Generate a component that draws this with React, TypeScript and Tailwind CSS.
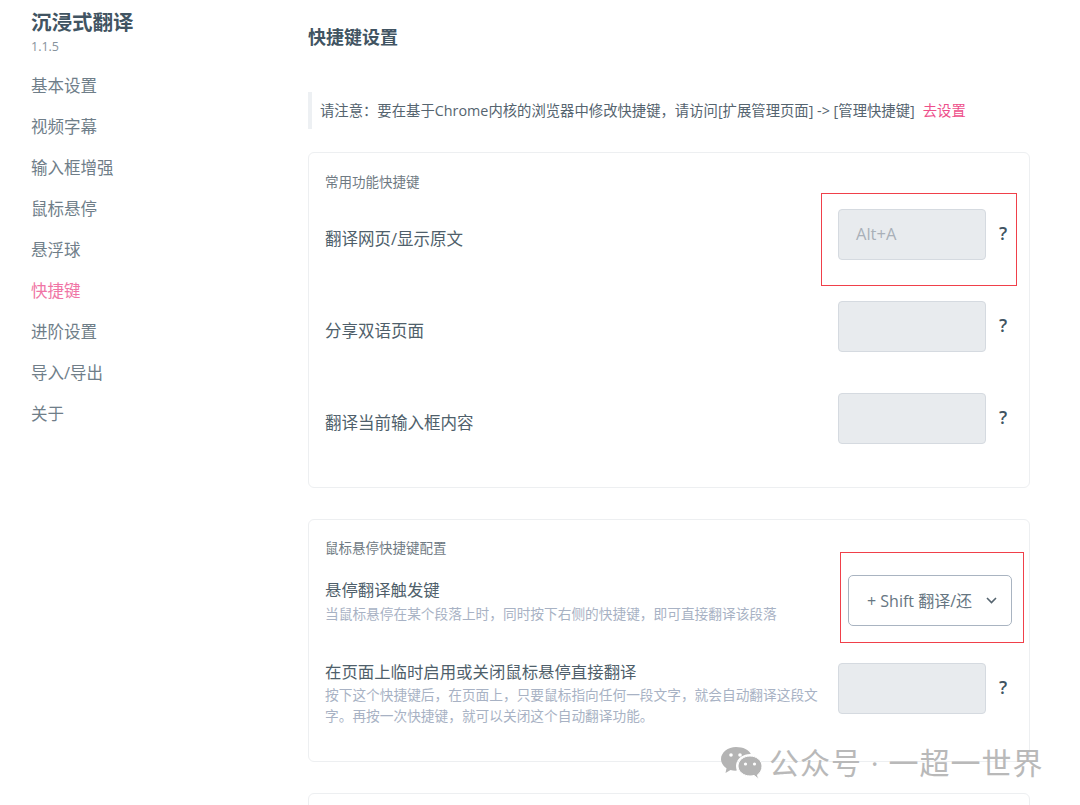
import React from "react";

const NAV_ITEMS = ["基本设置", "视频字幕", "输入框增强", "鼠标悬停", "悬浮球", "快捷键", "进阶设置", "导入/导出", "关于"];

// 全角标点
const NOTICE = "请注意\uFF1A要在基于Chrome内核的浏览器中修改快捷键\uFF0C请访问[扩展管理页面] -> [管理快捷键]";
const HOVER_DESC = "当鼠标悬停在某个段落上时\uFF0C同时按下右侧的快捷键\uFF0C即可直接翻译该段落";
const TOGGLE_DESC =
  "按下这个快捷键后\uFF0C在页面上\uFF0C只要鼠标指向任何一段文字\uFF0C就会自动翻译这段文字\u3002再按一次快捷键\uFF0C就可以关闭这个自动翻译功能\u3002";

function KeyInput({ value }: { value?: string }) {
  return (
    <div className="flex items-center gap-[13px]">
      <div className="flex h-[51px] w-[148px] items-center rounded-[4px] border border-[#d5dae0] bg-[#e8ebee] pl-[17px] text-[16.5px] text-[#a9b0b8]">
        {value}
      </div>
      <span className="w-[10px] pb-[2px] text-[18px] font-semibold text-[#415462]">?</span>
    </div>
  );
}

function ShortcutRow({ label, value, className }: { label: string; value?: string; className: string }) {
  return (
    <div className={`flex items-start justify-between ${className}`}>
      <span className="pt-[18px] text-[16.5px] leading-[24px] text-[#4f5f6b]">{label}</span>
      <KeyInput value={value} />
    </div>
  );
}

export default function App() {
  return (
    <div
      className="relative flex h-[805px] w-[1080px] overflow-hidden bg-white"
      style={{ fontFamily: '"Open Sans", "Noto Sans CJK SC", sans-serif' }}
    >
      <aside className="w-[308px] shrink-0 pl-[31px] pt-[8px]">
        <h1 className="text-[20.5px] font-bold leading-[28px] text-[#415462]">沉浸式翻译</h1>
        <p className="mt-[2px] text-[12.5px] leading-[18px] text-[#86929c]">1.1.5</p>
        <nav className="mt-[9px] flex flex-col">
          {NAV_ITEMS.map((item) => (
            <span
              key={item}
              className={`h-[41px] text-[16.5px] leading-[41px] ${item === "快捷键" ? "text-[#f075a5]" : "text-[#6f7e89]"}`}
            >
              {item}
            </span>
          ))}
        </nav>
      </aside>

      <main className="w-[722px] shrink-0 pt-[24px]">
        <h2 className="text-[18px] font-bold leading-[27px] text-[#415462]">快捷键设置</h2>

        <div className="mt-[41px] flex h-[37px] items-center border-l-[4px] border-[#edf0f3] pl-[8px] text-[14.35px] text-[#55646f]">
          {NOTICE}
          <span className="ml-[8px] text-[#ee4f8b]">去设置</span>
        </div>

        <section className="mt-[23px] h-[336px] rounded-[6px] border border-[#edeff1] px-[16px] pt-[19px] pr-[20px]">
          <h3 className="text-[13.5px] leading-[20px] text-[#6f7a83]">常用功能快捷键</h3>
          <ShortcutRow label="翻译网页/显示原文" value="Alt+A" className="mt-[17px]" />
          <ShortcutRow label="分享双语页面" className="mt-[41px]" />
          <ShortcutRow label="翻译当前输入框内容" className="mt-[41px]" />
        </section>

        <section className="mt-[31px] h-[243px] rounded-[6px] border border-[#edeff1] px-[16px] pt-[18px] pr-[20px]">
          <h3 className="text-[13.5px] leading-[20px] text-[#6f7a83]">鼠标悬停快捷键配置</h3>

          <div className="mt-[17px] flex items-start justify-between">
            <div className="pt-[3px]">
              <p className="text-[16.4px] leading-[24px] text-[#4f5f6b]">悬停翻译触发键</p>
              <p className="mt-[1px] text-[13.7px] leading-[21px] text-[#a8b2c4]">{HOVER_DESC}</p>
            </div>
            <div className="-mr-[3px] flex h-[51px] w-[164px] items-center rounded-[5px] border border-[#a9b4c1] pl-[18px] pr-[13px]">
              <span className="w-[105px] overflow-hidden whitespace-nowrap text-[16px] text-[#667682]">+ Shift 翻译/还原</span>
              <svg className="ml-auto" width="13" height="9" viewBox="0 0 13 9" fill="none" stroke="#55646f" strokeWidth="1.6">
                <path d="M2 2l4.500 4.500L11 2" />
              </svg>
            </div>
          </div>

          <div className="mt-[34px] flex items-start justify-between">
            <div className="w-[498px]">
              <p className="text-[16.4px] leading-[24px] text-[#4f5f6b]">在页面上临时启用或关闭鼠标悬停直接翻译</p>
              <p className="text-[13.7px] leading-[21px] text-[#a8b2c4]">{TOGGLE_DESC}</p>
            </div>
            <div className="pt-[3px]">
              <KeyInput />
            </div>
          </div>
        </section>

        <section className="mt-[31px] h-[60px] rounded-[6px] border border-[#edeff1]" />
      </main>

      {/* annotations on the screenshot */}
      <div className="absolute left-[821px] top-[193px] h-[93px] w-[196px] border border-[#f0404a]" />
      <div className="absolute left-[840px] top-[552px] h-[91px] w-[184px] border border-[#f0404a]" />

      {/* watermark */}
      <div className="absolute left-[721px] top-[745px] flex items-center gap-[7px]">
        <svg width="41" height="35" viewBox="0 0 41 35" fill="#b4b4b4">
          <path d="M15 1C7 1 0 6.500 0 13c0 3.800 2.200 7 5.500 9.200L4.500 27l5-3c1.500.400 3.200.700 5 .700.500 0 .900 0 1.300-.100C15.300 23 15 21.400 15 20c0-6.800 6.500-12 14-12 .300 0 .600 0 .800 0C28.200 3.800 22.100 1 15 1z" />
          <path d="M41 20c0-5.500-5.500-10-12-10s-12 4.500-12 10 5.500 10 12 10c1.400 0 2.800-.200 4-.600L37.500 33l-1-4.200C39.300 27 41 23.700 41 20z" stroke="#fff" strokeWidth="1" />
          <circle cx="10" cy="9" r="1.800" fill="#fff" />
          <circle cx="19" cy="9" r="1.800" fill="#fff" />
          <circle cx="24.500" cy="18" r="1.600" fill="#fff" />
          <circle cx="33.500" cy="18" r="1.600" fill="#fff" />
        </svg>
        <span className="whitespace-nowrap text-[30px] leading-[36px] tracking-[1px] text-[#b9b9b9]">公众号 · 一超一世界</span>
      </div>
    </div>
  );
}
